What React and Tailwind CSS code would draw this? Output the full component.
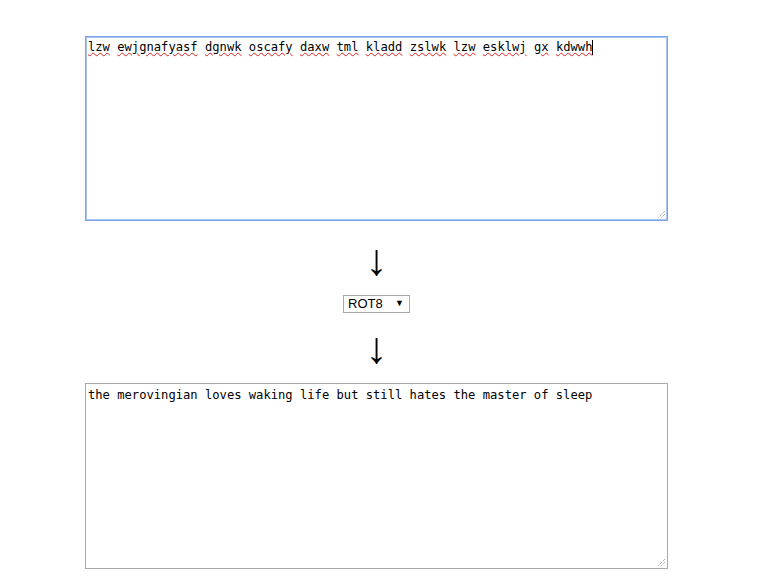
import React from 'react';

const inputWords = ['lzw', 'ewjgnafyasf', 'dgnwk', 'oscafy', 'daxw', 'tml', 'kladd', 'zslwk', 'lzw', 'esklwj', 'gx', 'kdwwh'];

const Grip = () => (
    <svg className="absolute right-[1px] bottom-[1px]" width="10" height="10" viewBox="0 0 10 10">
        <path d="M9 2 L2 9 M9 5 L5 9" stroke="#8a8a8a" strokeWidth="1" strokeDasharray="1 1" fill="none" />
    </svg>
);

const App = () => {
    return (
        <div className="w-[765px] h-[582px] bg-white font-['DejaVu_Sans_Mono',monospace]">
            <div className="flex flex-col items-center w-[583px] ml-[85px] pt-[36px]">
                <div className="relative w-full h-[185px] border border-[#7ba3ea] shadow-[inset_0_0_0_1px_#a9c4f2] px-[2px] pt-[3px] text-[12.15px] leading-[15px] text-black">
                    {inputWords.map((w, i) => (
                        <React.Fragment key={i}>
                            <span className="underline decoration-wavy decoration-[#e02020] decoration-1 underline-offset-[1px]">{w}</span>
                            {i < inputWords.length - 1 ? ' ' : null}
                        </React.Fragment>
                    ))}
                    <span className="inline-block w-px h-[15px] bg-black align-top"></span>
                    <Grip />
                </div>

                <div className="mt-[21px] h-[36px] flex items-center text-[44px] leading-none font-['Liberation_Sans',sans-serif] text-black">↓</div>

                <div className="mt-[17px] w-[67px] h-[18px] border border-[#a9a9a9] flex items-center justify-between pl-[4px] pr-[5px] font-['Liberation_Sans',Arial,sans-serif] text-[13px] text-black">
                    <span>ROT8</span>
                    <span className="text-[9px]">▼</span>
                </div>

                <div className="mt-[17px] h-[36px] flex items-center text-[44px] leading-none font-['Liberation_Sans',sans-serif] text-black">↓</div>

                <div className="relative mt-[17px] w-full h-[186px] border border-[#a9a9a9] px-[2px] pt-[4px] text-[12.15px] leading-[15px] text-black">
                    the merovingian loves waking life but still hates the master of sleep
                    <Grip />
                </div>
            </div>
        </div>
    );
};

export default App;
